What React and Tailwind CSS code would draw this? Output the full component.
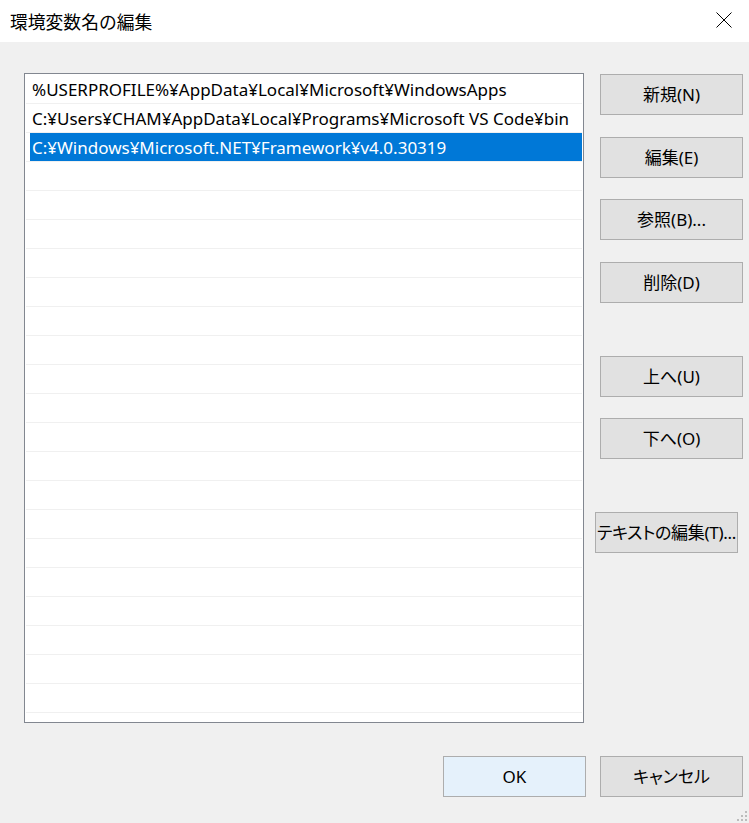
import React from "react";

const rows = [
  "%USERPROFILE%¥AppData¥Local¥Microsoft¥WindowsApps",
  "C:¥Users¥CHAM¥AppData¥Local¥Programs¥Microsoft VS Code¥bin",
  "C:¥Windows¥Microsoft.NET¥Framework¥v4.0.30319",
];

function Btn({ children, className = "" }) {
  return (
    <div
      className={
        "flex h-[41px] w-[143px] items-center justify-center whitespace-nowrap border border-[#adadad] bg-[#e1e1e1] text-[17px] text-black [font-feature-settings:'palt'] " +
        className
      }
    >
      {children}
    </div>
  );
}

export default function App() {
  const all = [...rows];
  while (all.length < 23) all.push("");
  return (
    <div
      className="flex h-[823px] w-[749px] flex-col overflow-hidden bg-[#f0f0f0] text-black"
      style={{ fontFamily: '"Noto Sans", "Noto Sans CJK JP", sans-serif' }}
    >
      <div className="flex h-[42px] shrink-0 items-center justify-between bg-white pl-[10px] pr-[17px]">
        <span className="text-[17.8px]" style={{ fontFamily: '"Noto Sans CJK JP", sans-serif' }}>
          環境変数名の編集
        </span>
        <svg width="16" height="16" viewBox="0 0 16 16" className="mb-[2px]">
          <path d="M0.5 0.5 L15.5 15.5 M15.5 0.5 L0.5 15.5" stroke="#000" strokeWidth="1" fill="none" />
        </svg>
      </div>
      <div className="flex pl-[24px] pt-[31px]">
        <div className="h-[650px] w-[560px] overflow-hidden border border-[#828790] bg-white pl-px pr-px pt-px">
          {all.map((t, i) => (
            <div key={i} className="h-[29px] border-b border-[#f0f0f0]">
              <div
                className={
                  "ml-[4px] flex h-full items-center whitespace-nowrap pl-[2px] pt-[2px] text-[17px] " +
                  (i === 2 ? "bg-[#0078d7] text-white" : "")
                }
              >
                {t}
              </div>
            </div>
          ))}
        </div>
        <div className="ml-[16px] flex flex-col pt-px">
          <Btn>新規(N)</Btn>
          <Btn className="mt-[22px]">編集(E)</Btn>
          <Btn className="mt-[21px]">参照(B)...</Btn>
          <Btn className="mt-[22px]">削除(D)</Btn>
          <Btn className="mt-[53px]">上へ(U)</Btn>
          <Btn className="mt-[21px]">下へ(O)</Btn>
          <Btn className="-ml-[5px] mt-[53px] tracking-[-0.3px]">テキストの編集(T)...</Btn>
        </div>
      </div>
      <div className="relative flex flex-1 justify-end gap-[14px] pr-[6px] pt-[33px]">
        <Btn className="border-[#0078d7] bg-[#e5f1fb]">OK</Btn>
        <Btn>キャンセル</Btn>
        <svg width="12" height="12" viewBox="0 0 12 12" className="absolute bottom-px right-px">
          <rect x="9" y="1" width="2" height="2" fill="#bcbcbc" />
          <rect x="5" y="5" width="2" height="2" fill="#bcbcbc" />
          <rect x="9" y="5" width="2" height="2" fill="#bcbcbc" />
          <rect x="1" y="9" width="2" height="2" fill="#bcbcbc" />
          <rect x="5" y="9" width="2" height="2" fill="#bcbcbc" />
          <rect x="9" y="9" width="2" height="2" fill="#bcbcbc" />
        </svg>
      </div>
    </div>
  );
}
